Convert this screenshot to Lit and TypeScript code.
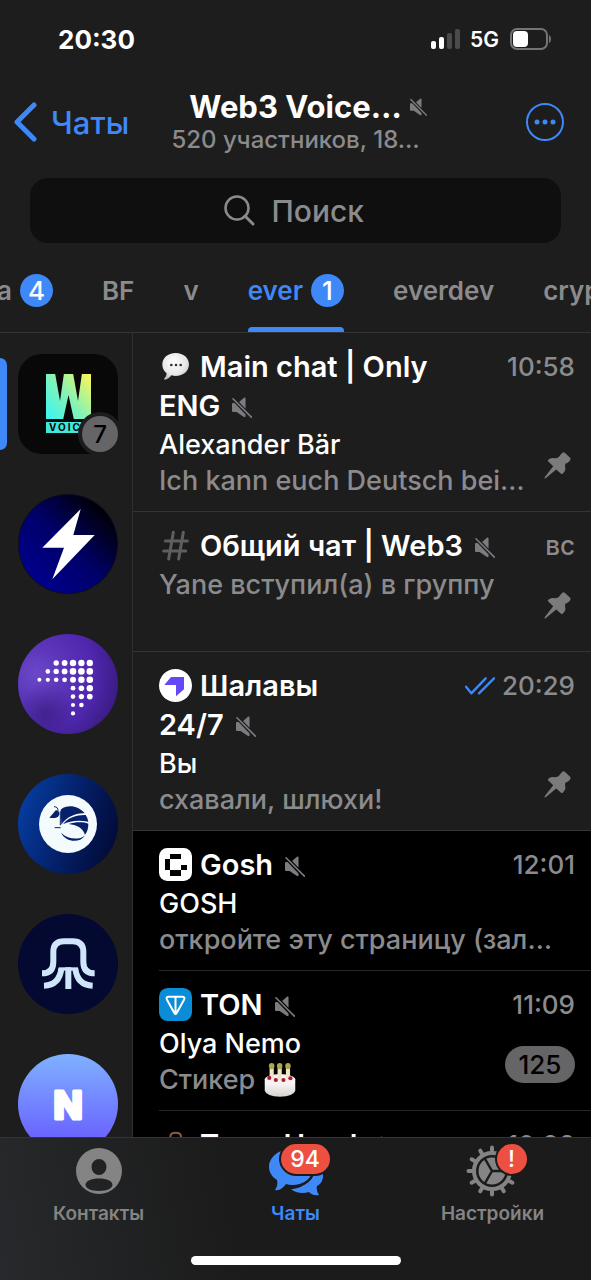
import { LitElement, html, svg, css, nothing, TemplateResult } from "lit";
import { customElement } from "lit/decorators.js";
import { classMap } from "lit/directives/class-map.js";

interface Chat {
  icon: TemplateResult;
  title: string[];
  time: string;
  author?: string;
  message: string;
  sticker?: boolean;
  read?: boolean;
  pinned?: boolean;
  unread?: number;
}

/* ---------- Inline glyphs ---------- */

const muteIcon = html`<svg class="mute" viewBox="0 0 62 64" role="img" aria-label="Без звука">
  <path fill="currentColor" d="M22 15 L37 2 Q42 -1 42 5 V36 Z M0 21 Q0 18 3 18 H8 L42 54 V58 Q42 65 36 61 L14 46 H3 Q0 46 0 42 Z" />
  <path d="M3 5 L60 62" stroke="currentColor" stroke-width="5" stroke-linecap="round" />
</svg>`;

const pinIcon = html`<svg class="pin" viewBox="0 0 80 82" role="img" aria-label="Закреплено">
  <path fill="currentColor" d="M54 3 Q58 -1 62 2 L79 18 Q81 22 77 27 Q71 33 64 36 Q62 42 64 50 Q65 58 56 66 Q53 68 50 65 L36 53 L4 80 Q0 82 1 77 L27 43 L12 29 Q9 26 13 23 Q22 17 32 19 Q38 19 44 15 Q48 9 54 3Z" />
</svg>`;

const checksIcon = html`<svg class="checks" viewBox="0 0 90 54" role="img" aria-label="Прочитано">
  <path d="M3 29 L19 49 L62 4 M42 49 L87 4" fill="none" stroke="currentColor" stroke-width="7" stroke-linecap="round" stroke-linejoin="round" />
</svg>`;

const cakeIcon = html`<svg class="cake" viewBox="0 0 90 98" role="img" aria-label="Торт">
  <defs>
    <linearGradient id="cake-side" x1="0" y1="0" x2="0" y2="1">
      <stop offset="0" stop-color="#fff" /><stop offset="1" stop-color="#d8d2d0" />
    </linearGradient>
  </defs>
  <path d="M1 48 V80 Q6 96 45 97 Q84 96 89 80 V48 Z" fill="url(#cake-side)" />
  <ellipse cx="45" cy="47" rx="44" ry="15" fill="#f7f2ef" />
  <g fill="#f3e3c8"><rect x="15" y="14" width="12" height="32" rx="3" /><rect x="38" y="14" width="12" height="34" rx="3" /><rect x="62" y="14" width="12" height="32" rx="3" /></g>
  <g fill="#a9a84a"><ellipse cx="21" cy="9" rx="8" ry="9" /><ellipse cx="44" cy="9" rx="8" ry="9" /><ellipse cx="68" cy="9" rx="8" ry="9" /></g>
  <g fill="#a51c3d"><circle cx="14" cy="43" r="6" /><circle cx="33" cy="49" r="6" /><circle cx="55" cy="49" r="6" /><circle cx="75" cy="44" r="6" /></g>
</svg>`;

const speechIcon = html`<svg class="mark" viewBox="0 0 99 99" aria-hidden="true">
  <defs>
    <radialGradient id="bubble-fill" cx=".45" cy=".35" r=".65">
      <stop offset="0" stop-color="#fff" /><stop offset=".7" stop-color="#e6e6e6" /><stop offset="1" stop-color="#bdbdbd" />
    </radialGradient>
  </defs>
  <path d="M50 9 C74 9 90 24 90 43 C90 64 73 78 50 78 Q43 78 37 76 Q29 88 17 89 Q13 88 17 84 Q23 77 23 70 C14 63 10 54 10 43 C10 24 26 9 50 9Z" fill="url(#bubble-fill)" />
  <g fill="#333"><circle cx="37" cy="45" r="4" /><circle cx="51" cy="45" r="4" /><circle cx="65" cy="45" r="4" /></g>
</svg>`;

const hashIcon = html`<svg class="mark" viewBox="0 0 99 99" aria-hidden="true">
  <path d="M43 10 L29 90 M73 10 L59 90 M19 36 H85 M14 66 H80" stroke="#5e5e60" stroke-width="9" stroke-linecap="round" />
</svg>`;

const arrowIcon = html`<svg class="mark" viewBox="0 0 99 99" aria-hidden="true">
  <circle cx="49.500" cy="49.500" r="49.500" fill="#fff" />
  <path d="M16 48 L36 24 H75 V61 L51 82 V48 Z" fill="#6447f5" />
</svg>`;

const pixelIcon = html`<svg class="mark" viewBox="0 0 6 6" aria-hidden="true">
  <rect width="6" height="6" rx="1.500" fill="#fff" />
  <path d="M2 1 H4 V2 H2 Z M1 2 H2 V4 H1 Z M2 4 H4 V5 H2 Z M4 3 H5 V4 H4 Z" fill="#000" shape-rendering="crispEdges" />
</svg>`;

const tonIcon = html`<svg class="mark" viewBox="0 0 99 99" aria-hidden="true">
  <rect width="99" height="99" rx="26" fill="#0a8cd6" />
  <path d="M28 26 H71 Q79 27 75 35 L53 75 Q49.500 81 46 75 L24 35 Q20 27 28 26 Z M49.500 27 V76" fill="none" stroke="#fff" stroke-width="6" stroke-linejoin="round" />
</svg>`;

const doorIcon = html`<svg class="mark" viewBox="0 0 99 99" aria-hidden="true">
  <path d="M34 90 V26 Q34 14 50 14 Q66 14 66 26 V90" fill="none" stroke="#8a5a45" stroke-width="6" />
</svg>`;

/* ---------- Workspace avatars, each on a 100 × 100 board ---------- */

const voiceAvatar = html`<svg viewBox="0 0 100 100" aria-hidden="true">
  <defs>
    <linearGradient id="voice-fill" x1="0" y1=".9" x2="1" y2=".1">
      <stop offset="0" stop-color="#3df5f0" /><stop offset=".5" stop-color="#86f3b4" /><stop offset="1" stop-color="#f6f65e" />
    </linearGradient>
  </defs>
  <rect width="100" height="100" rx="24" fill="#080808" />
  <rect x="28" y="20" width="45" height="45" fill="url(#voice-fill)" />
  <path d="M37 19 H46 L42 47 Z M55 19 H64 L60 47 Z M45 66 L50.500 41 L56 66 Z" fill="#080808" />
  <rect x="28" y="68" width="45" height="11" fill="#41e6dc" />
  <text x="31" y="77" class="voice-text" fill="#080808">VOICE</text>
</svg>`;

const boltAvatar = html`<svg viewBox="0 0 100 100" aria-hidden="true">
  <defs>
    <linearGradient id="bolt-fill" x1=".1" y1=".8" x2=".8" y2=".1">
      <stop offset="0" stop-color="#00008c" /><stop offset=".5" stop-color="#000068" /><stop offset="1" stop-color="#000008" />
    </linearGradient>
  </defs>
  <circle cx="50" cy="50" r="50" fill="#0a0a24" />
  <circle cx="50" cy="50" r="49" fill="url(#bolt-fill)" />
  <path d="M62.700 15 L55.300 41 H76.700 L34.300 85.300 L46 53.700 H24.300 Z" fill="#fff" />
</svg>`;

const dotRows: [number, number[]][] = [
  [29, [0, 0, 2.7, 2.9, 3.2, 3.2, 3.2]],
  [37.4, [0, 2.3, 2.7, 2.9, 3.3, 3.3, 3.3]],
  [45.8, [2, 2.1, 2.3, 2.4, 3, 3.2, 3.3]],
  [54.2, [0, 0, 0, 0, 2.4, 2.8, 3.2]],
  [62.6, [0, 0, 0, 0, 2.3, 2.7, 2.9]],
  [71, [0, 0, 0, 0, 2.1, 2.3, 0]],
  [79.4, [0, 0, 0, 0, 2.1, 0, 0]],
];

const dotsAvatar = html`<svg viewBox="0 0 100 100" aria-hidden="true">
  <defs>
    <radialGradient id="dots-fill" cx=".18" cy=".4" r=".9">
      <stop offset="0" stop-color="#6a48c8" /><stop offset=".35" stop-color="#5a33b8" /><stop offset=".65" stop-color="#4f27ae" /><stop offset="1" stop-color="#35197a" />
    </radialGradient>
    <radialGradient id="dots-shade" cx=".28" cy=".8" r=".3">
      <stop offset="0" stop-color="#2c1668" stop-opacity=".5" /><stop offset="1" stop-color="#2c1668" stop-opacity="0" />
    </radialGradient>
  </defs>
  <circle cx="50" cy="50" r="50" fill="url(#dots-fill)" />
  <circle cx="50" cy="50" r="50" fill="url(#dots-shade)" />
  ${dotRows.map(([y, radii]) =>
    radii.map((r, i) => (r ? svg`<circle cx=${21.4 + i * 8.4} cy=${y} r=${r} fill="#fff" />` : nothing))
  )}
</svg>`;

const armadilloAvatar = html`<svg viewBox="0 0 100 100" aria-hidden="true">
  <defs>
    <linearGradient id="arm-fill" x1=".05" y1=".3" x2=".95" y2=".6">
      <stop offset="0" stop-color="#063a9c" /><stop offset=".5" stop-color="#04216b" /><stop offset="1" stop-color="#020d3c" />
    </linearGradient>
  </defs>
  <circle cx="50" cy="50" r="50" fill="url(#arm-fill)" />
  <circle cx="50" cy="50" r="29" fill="#f4fbfd" />
  <g transform="translate(10 10) scale(.3333)" fill="#06206a">
    <path d="M98 77 C118 61 150 64 170 88 C145 86 116 98 100 122 Z" />
    <path d="M105 121 C120 100 148 92 173 93 Q180 103 181 113 C152 107 125 110 105 121 Z" />
    <path d="M122 120 C142 113 165 113 181 119 C181 134 178 144 171 152 C164 132 146 122 122 120 Z" />
    <path d="M99 146 C112 173 152 180 171 155 C152 168 122 168 99 146 Z" />
    <path d="M64 101 L84 78 L94 84 V92 C88 104 76 103 64 101 Z" />
    <path d="M78 68 Q91 68 90 82 M97 82 V124 M80 131 H98" fill="none" stroke="#06206a" stroke-width="3" />
  </g>
</svg>`;

const squidAvatar = html`<svg viewBox="0 0 100 100" aria-hidden="true">
  <circle cx="50" cy="50" r="50" fill="#030930" />
  <g transform="translate(-18 -24) scale(.3333)" fill="none" stroke="#cfe6fa" stroke-width="18">
    <path d="M126 250 C150 250 160 237 160 215 V186 Q160 154 192 154 H218 Q250 154 250 186 V215 C250 237 260 250 284 250" />
    <path d="M132 287 C162 286 180 270 184 236 M278 287 C248 286 230 270 226 236 M205 232 V297" />
    <path d="M176 237 H234" stroke-width="10" />
  </g>
</svg>`;

const nAvatar = html`<svg viewBox="0 0 100 100" aria-hidden="true">
  <defs>
    <linearGradient id="n-fill" x1="0" y1="0" x2="0" y2="1">
      <stop offset="0" stop-color="#7fb1ff" /><stop offset=".8" stop-color="#6b68ff" /><stop offset="1" stop-color="#6455ff" />
    </linearGradient>
  </defs>
  <circle cx="50" cy="50" r="50" fill="url(#n-fill)" />
  <text x="50" y="65" text-anchor="middle" class="n-text" fill="#fff" stroke="#fff">N</text>
</svg>`;

const avatars = [
  { name: "Web3 Voice", art: voiceAvatar, active: true, unread: 7 },
  { name: "Bolt", art: boltAvatar },
  { name: "Everscale", art: dotsAvatar },
  { name: "Armadillo", art: armadilloAvatar },
  { name: "Octus", art: squidAvatar },
  { name: "N", art: nAvatar },
] as { name: string; art: TemplateResult; active?: boolean; unread?: number }[];

const chats: Chat[] = [
  { icon: speechIcon, title: ["Main chat | Only", "ENG"], time: "10:58", author: "Alexander Bär", message: "Ich kann euch Deutsch bei…", pinned: true },
  { icon: hashIcon, title: ["Общий чат | Web3"], time: "вс", message: "Yane вступил(а) в группу", pinned: true },
  { icon: arrowIcon, title: ["Шалавы", "24/7"], time: "20:29", author: "Вы", message: "схавали, шлюхи!", read: true, pinned: true },
  { icon: pixelIcon, title: ["Gosh"], time: "12:01", author: "GOSH", message: "откройте эту страницу (зал…" },
  { icon: tonIcon, title: ["TON"], time: "11:09", author: "Olya Nemo", message: "Стикер", sticker: true, unread: 125 },
  { icon: doorIcon, title: ["Town Head"], time: "10:28", message: "" },
];

const folders = [
  { name: "a", count: 4 },
  { name: "BF" },
  { name: "v" },
  { name: "ever", count: 1, active: true },
  { name: "everdev" },
  { name: "cryp" },
] as { name: string; count?: number; active?: boolean }[];

const reset = css`
  * { box-sizing: border-box; }
  button { border: 0; padding: 0; margin: 0; background: none; font: inherit; color: inherit; cursor: pointer; }
  svg { display: block; flex: none; }
  .mute { width: 20px; height: 21px; color: #7c7c80; }
`;

@customElement("top-bar")
class TopBar extends LitElement {
  static styles = [reset, css`
    :host { display: block; flex: none; }
    .status { display: flex; align-items: center; height: 78px; padding: 0 40px 0 58px; color: #fff; }
    .clock { flex: 1; font-size: 26px; font-weight: 700; }
    .signal { width: 30px; height: 20px; }
    .network { margin: 0 11px 0 9px; font-size: 21px; font-weight: 600; }
    .battery { width: 41px; height: 22px; }
    .header { display: grid; grid-template-columns: 1fr auto 1fr; align-items: center; height: 88px; padding: 0 14px; }
    .back { display: flex; align-items: center; gap: 14px; justify-self: start; font-size: 31px; font-weight: 500; color: #3e88f7; }
    .chevron { width: 23px; height: 40px; }
    .titles { padding-top: 2px; text-align: center; }
    .title { display: flex; align-items: center; justify-content: center; gap: 8px; padding-left: 25px; margin: 0; font-size: 31px; line-height: 34px; font-weight: 700; color: #fff; }
    .title .mute { width: 17px; height: 18px; }
    .members { margin: 0; font-size: 24px; line-height: 32px; font-weight: 500; color: #8b8b8d; }
    .more { justify-self: end; margin-right: 13px; color: #3e88f7; }
    .more svg { width: 38px; height: 38px; }
    .search { display: flex; align-items: center; justify-content: center; gap: 17px; height: 65px; margin: 12px 30px 0; border-radius: 18px; background: #0f0f0f; color: #8b8b8d; }
    .search svg { width: 31px; height: 31px; }
    .search input { width: 96px; padding: 0; border: 0; outline: 0; background: none; font: inherit; font-size: 30px; font-weight: 500; color: #fff; }
    .search input::placeholder { color: #8b8b8d; opacity: 1; }
    .folders { display: flex; gap: 49px; height: 90px; margin-left: -3px; overflow: hidden; border-bottom: 1px solid #343436; }
    .folder { display: grid; grid-template-rows: 1fr 5px; flex: none; padding-top: 10px; font-size: 26px; font-weight: 600; color: #8b8b8d; }
    .folder-name { display: flex; align-items: center; gap: 8px; }
    .folder.active { color: #3e88f7; }
    .active .underline { border-radius: 4px 4px 0 0; background: #3e88f7; }
    .count { display: grid; place-items: center; width: 33px; height: 33px; border-radius: 50%; background: #3e88f7; color: #fff; font-weight: 500; }
  `];

  render() {
    return html`
      <div class="status">
        <span class="clock">20:30</span>
        <svg class="signal" viewBox="0 0 30 20" aria-hidden="true">
          <rect y="12" width="5" height="8" rx="2" fill="#fff" /><rect x="8" y="8" width="5" height="12" rx="2" fill="#fff" />
          <rect x="16" y="4" width="5" height="16" rx="2" fill="#4b4b4b" /><rect x="24" width="5" height="20" rx="2" fill="#4b4b4b" />
        </svg>
        <span class="network">5G</span>
        <svg class="battery" viewBox="0 0 41 22" aria-hidden="true">
          <rect x="1" y="1" width="36" height="20" rx="6" fill="none" stroke="#747474" stroke-width="2" />
          <rect x="3" y="3" width="15" height="16" rx="4" fill="#fff" />
          <path d="M39 7 Q41 8 41 11 Q41 14 39 15 Z" fill="#747474" />
        </svg>
      </div>
      <header class="header">
        <button class="back">
          <svg class="chevron" viewBox="0 0 23 40" aria-hidden="true"><path d="M20 3 L3 20 L20 37" fill="none" stroke="currentColor" stroke-width="5" stroke-linecap="round" stroke-linejoin="round" /></svg>
          Чаты
        </button>
        <div class="titles">
          <h1 class="title">Web3 Voice… ${muteIcon}</h1>
          <p class="members">520 участников, 18…</p>
        </div>
        <button class="more" aria-label="Ещё">
          <svg viewBox="0 0 38 38" aria-hidden="true">
            <circle cx="19" cy="19" r="18" fill="none" stroke="currentColor" stroke-width="2" />
            <g fill="currentColor"><circle cx="11" cy="19" r="2.500" /><circle cx="19" cy="19" r="2.500" /><circle cx="27" cy="19" r="2.500" /></g>
          </svg>
        </button>
      </header>
      <label class="search">
        <svg viewBox="0 0 31 31" aria-hidden="true"><circle cx="13" cy="13" r="11.500" fill="none" stroke="currentColor" stroke-width="2.500" /><path d="M21 21 L29 29" stroke="currentColor" stroke-width="3" stroke-linecap="round" /></svg>
        <input type="text" placeholder="Поиск" aria-label="Поиск" />
      </label>
      <nav class="folders">
        ${folders.map((f) => html`
          <button class=${classMap({ folder: true, active: !!f.active })}>
            <span class="folder-name">${f.name}${f.count ? html`<span class="count">${f.count}</span>` : nothing}</span>
            <span class="underline"></span>
          </button>`)}
      </nav>`;
  }
}

@customElement("side-rail")
class SideRail extends LitElement {
  static styles = [reset, css`
    :host { display: flex; flex-direction: column; flex: none; gap: 40px; box-sizing: border-box; width: 133px; padding-top: 21px; overflow: hidden; border-right: 1px solid #303032; }
    .item { position: relative; display: flex; flex: none; align-items: center; gap: 11px; }
    .marker { width: 7px; height: 92px; border-radius: 0 7px 7px 0; }
    .active .marker { background: #3e88f7; }
    .item svg { width: 100px; height: 100px; }
    .badge { position: absolute; right: 10px; bottom: -2px; display: grid; place-items: center; width: 44px; height: 44px; border: 4px solid #1d1d1d; border-radius: 50%; background: #656567; color: #000; font-size: 24px; font-weight: 500; }
    .voice-text { font: 700 10px Inter, sans-serif; letter-spacing: 2px; }
    .n-text { font: 800 38px Inter, sans-serif; stroke-width: 3px; stroke-linejoin: round; }
  `];

  render() {
    return avatars.map((a) => html`
      <button class=${classMap({ item: true, active: !!a.active })} aria-label=${a.name}>
        <span class="marker"></span>${a.art}
        ${a.unread ? html`<span class="badge">${a.unread}</span>` : nothing}
      </button>`);
  }
}

@customElement("chat-list")
class ChatList extends LitElement {
  static styles = [reset, css`
    :host { display: block; flex: 1; min-width: 0; overflow: hidden; background: #000; }
    .chat { padding-left: 26px; }
    .chat.pinned { background: #1d1d1d; border-bottom: 1px solid #343436; }
    .body { padding: 14px 16px 12px 0; }
    .chat:not(.pinned) .body { border-bottom: 1px solid #262628; }
    .top { display: flex; align-items: flex-start; justify-content: space-between; margin-bottom: 2px; }
    .title { margin: 0; font-size: 29px; font-weight: 600; color: #fff; }
    .line { display: flex; align-items: center; gap: 8px; height: 39px; line-height: 39px; white-space: nowrap; }
    .line .mute { margin: 3px 0 0 4px; }
    .mark { width: 33px; height: 33px; }
    .meta { display: flex; align-items: center; gap: 7px; height: 39px; font-size: 26px; font-weight: 500; color: #8b8b8d; }
    .checks { width: 30px; height: 18px; color: #3e88f7; }
    .bottom { display: flex; align-items: center; gap: 12px; height: 72px; }
    .text { flex: 1; align-self: flex-start; min-width: 0; font-size: 27px; line-height: 36px; font-weight: 500; white-space: nowrap; }
    .author, .message { margin: 0; }
    .author { color: #fff; }
    .message { display: flex; align-items: center; gap: 9px; color: #8b8b8d; }
    .cake { width: 32px; height: 34px; }
    .pin { width: 27px; height: 27px; margin: 4px 4px 0 0; color: #7b7b7d; }
    .unread { display: grid; place-items: center; min-width: 70px; height: 37px; padding: 0 11px; margin: 4px 0 0; border-radius: 19px; background: #656567; color: #000; font-size: 26px; font-weight: 500; }
  `];

  render() {
    return chats.map((c) => html`
      <article class=${classMap({ chat: true, pinned: !!c.pinned })}>
        <div class="body">
          <div class="top">
            <h2 class="title">
              ${c.title.map((line, i) => html`<span class="line">
                ${i === 0 ? c.icon : nothing}<span>${line}</span>${i === c.title.length - 1 ? muteIcon : nothing}
              </span>`)}
            </h2>
            <span class="meta">${c.read ? checksIcon : nothing}<time>${c.time}</time></span>
          </div>
          <div class="bottom">
            <div class="text">
              ${c.author ? html`<p class="author">${c.author}</p>` : nothing}
              <p class="message">${c.message}${c.sticker ? cakeIcon : nothing}</p>
            </div>
            ${c.pinned ? pinIcon : nothing}
            ${c.unread ? html`<span class="unread">${c.unread}</span>` : nothing}
          </div>
        </div>
      </article>`);
  }
}

const teeth = Array.from({ length: 12 }, (_, i) => i * 30);

@customElement("tab-bar")
class TabBar extends LitElement {
  static styles = [reset, css`
    :host { display: block; flex: none; box-sizing: border-box; height: 143px; border-top: 1px solid #343436; background: linear-gradient(80deg, #27292c 0%, #212223 20%, #1b1b1b 40%); }
    .tabs { display: grid; grid-template-columns: repeat(3, 1fr); height: 118px; }
    .tab { display: flex; flex-direction: column; align-items: center; padding-top: 7px; color: #848484; font-size: 19px; line-height: 24px; font-weight: 600; }
    .tab.active { color: #3e88f7; }
    .icon { position: relative; margin-bottom: 5px; }
    .icon svg { width: 54px; height: 52px; }
    .alert { position: absolute; top: -1px; left: 50%; display: grid; place-items: center; min-width: 30px; height: 30px; padding: 0 8px; margin-left: 4px; border-radius: 15px; background: #ed4f41; box-shadow: 0 0 0 2px #1b1b1b; color: #fff; font-size: 23px; font-weight: 500; }
    .alert.wide { min-width: 49px; margin-left: -15px; }
    .home { width: 210px; height: 9px; margin: 0 auto; border-radius: 5px; background: #fff; }
  `];

  render() {
    return html`
      <nav class="tabs">
        <button class="tab">
          <span class="icon"><svg viewBox="0 0 54 52" aria-hidden="true">
            <path fill-rule="evenodd" fill="currentColor" d="M27 3 A23 23 0 1 1 27 49 A23 23 0 1 1 27 3 Z M27 14 A7.500 8 0 1 0 27 30 A7.500 8 0 1 0 27 14 Z M27 33.500 C19 33.500 13.500 36 13.500 40 C13.500 43 19 46 27 46 C35 46 40.500 43 40.500 40 C40.500 36 35 33.500 27 33.500 Z" />
          </svg></span>
          Контакты
        </button>
        <button class="tab active">
          <span class="icon"><svg viewBox="0 0 54 52" aria-hidden="true">
            <path fill="currentColor" d="M22 44 C34 44 46 34 48 20 C53 23 54.500 27 54 32 C53.500 36 52 39 48 41 C47 45 49 48 50 50 C45 51 42 49 40 47 C34 49 26 48 22 44 Z" />
            <path fill="currentColor" stroke="#1b1b1b" stroke-width="5" paint-order="stroke" d="M23 4 C36 4 44 12 44 22 C44 33 35 40 23 40 Q20 40 17 39 C14 43 10 46 6 45 C8 42 9 39 8 35 C3 32 0 27 0 22 C0 12 10 4 23 4 Z" />
          </svg><span class="alert wide">94</span></span>
          Чаты
        </button>
        <button class="tab">
          <span class="icon"><svg viewBox="0 0 54 52" aria-hidden="true">
            <g fill="none" stroke="currentColor">
              <circle cx="26" cy="26" r="18" stroke-width="4" />
              ${teeth.map((a) => svg`<path d="M26 6 V2.500" stroke-width="4" stroke-linecap="round" transform="rotate(${a} 26 26)" />`)}
            </g>
            <circle cx="26" cy="26" r="13.500" fill="currentColor" />
            <path d="M26 26 H41 M26 26 L18.500 13 M26 26 L18.500 39" stroke="#1b1b1b" stroke-width="2.500" />
          </svg><span class="alert">!</span></span>
          Настройки
        </button>
      </nav>
      <div class="home"></div>`;
  }
}

@customElement("app-root")
class AppRoot extends LitElement {
  static styles = css`
    :host { display: flex; flex-direction: column; height: 100vh; overflow: hidden; background: #1d1d1d; color: #fff; font-family: Inter, "Noto Sans", sans-serif; }
    .content { display: flex; flex: 1; min-height: 0; }
  `;

  render() {
    return html`
      <top-bar></top-bar>
      <main class="content">
        <side-rail></side-rail>
        <chat-list></chat-list>
      </main>
      <tab-bar></tab-bar>`;
  }
}
